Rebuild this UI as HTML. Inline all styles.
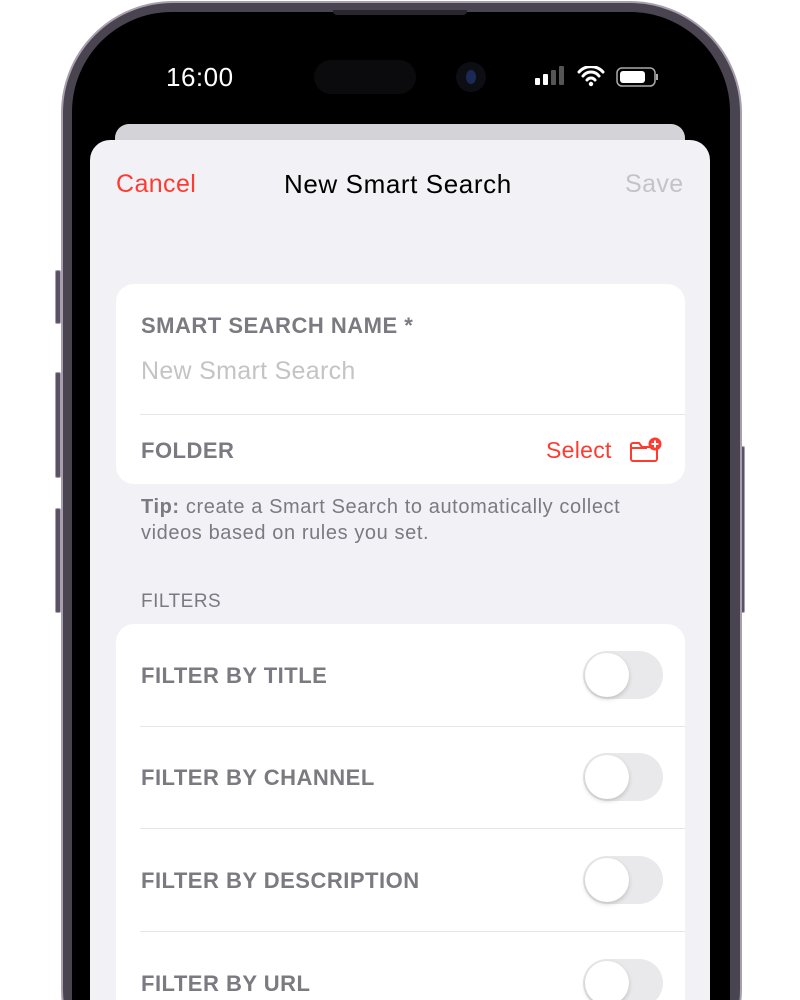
<!DOCTYPE html>
<html><head><meta charset="utf-8"><style>
*{margin:0;padding:0;box-sizing:border-box}
html,body{width:800px;height:1000px;overflow:hidden}
body{background:#fff;position:relative;font-family:"Liberation Sans",sans-serif}
.frame{position:absolute;left:61px;top:1px;width:681px;height:1100px;border-radius:112px;background:#4a4350;border:2px solid #a79fae}
.bezel{position:absolute;left:72px;top:12px;width:658px;height:1100px;border-radius:100px;background:#000}
.btn{position:absolute;background:#5a5262;border:1px solid #a79fae;border-radius:2px}
.back{position:absolute;left:115px;top:124px;width:570px;height:40px;border-radius:14px;background:#d4d3d8}
.sheet{position:absolute;left:90px;top:140px;width:620px;height:860px;border-radius:20px 20px 0 0;background:#f2f1f6}
.t{position:absolute;white-space:nowrap}
.card{position:absolute;left:116px;width:569px;background:#fff;border-radius:18px}
.lbl{position:absolute;left:25px;font-size:22px;font-weight:bold;color:#7b7a80;letter-spacing:0.5px}
.sep{position:absolute;left:24px;right:0;height:1px;background:#e6e5ea}
.tog{position:absolute;left:467px;width:80px;height:48px;border-radius:24px;background:#e9e9eb}
.tog::after{content:"";position:absolute;left:2px;top:2px;width:44px;height:44px;border-radius:50%;background:#fff;box-shadow:0 2px 5px rgba(0,0,0,.18)}
</style></head><body>
<div class="btn" style="left:55px;top:270px;width:6px;height:54px"></div>
<div class="btn" style="left:55px;top:372px;width:6px;height:106px"></div>
<div class="btn" style="left:55px;top:508px;width:6px;height:105px"></div>
<div class="btn" style="left:739px;top:446px;width:6px;height:167px"></div>
<div class="frame"></div>
<div class="bezel"></div>
<div style="position:absolute;left:333px;top:10px;width:134px;height:5px;background:#2a262e;border-radius:0 0 4px 4px"></div>
<div style="position:absolute;left:314px;top:60px;width:102px;height:34px;border-radius:17px;background:#0b0b0d"></div>
<div style="position:absolute;left:456px;top:62px;width:30px;height:30px;border-radius:50%;background:#0d0d14"></div>
<div style="position:absolute;left:466px;top:70px;width:10px;height:14px;border-radius:50%;background:#1b2a55"></div>
<div class="t" style="left:166px;top:62px;font-size:26px;color:#fff;letter-spacing:0.5px">16:00</div>
<svg style="position:absolute;left:535px;top:66px" width="125" height="22">
<rect x="0" y="12" width="5" height="7" rx="1" fill="#fff"/><rect x="8" y="8" width="5" height="11" rx="1" fill="#fff"/><rect x="16" y="4" width="5" height="15" rx="1" fill="#555"/><rect x="24" y="0" width="5" height="19" rx="1" fill="#555"/>
<path d="M44 6a16 16 0 0 1 24 0M48 10a10 10 0 0 1 16 0M52 14a5 5 0 0 1 8 0" stroke="#fff" stroke-width="3" fill="none" stroke-linecap="round"/><circle cx="56" cy="18" r="2.2" fill="#fff"/>
<rect x="82" y="2" width="38" height="18" rx="5" fill="none" stroke="#aaa" stroke-width="1.5"/><rect x="85" y="5" width="25" height="12" rx="3" fill="#fff"/><rect x="121" y="8" width="2" height="6" fill="#aaa"/>
</svg>
<div class="back"></div>
<div class="sheet"></div>
<div class="t" style="left:116px;top:170px;font-size:25px;color:#ff3b30;letter-spacing:0.4px">Cancel</div>
<div class="t" style="left:284px;top:169px;font-size:26px;color:#000;letter-spacing:0.6px">New Smart Search</div>
<div class="t" style="left:625px;top:170px;font-size:25px;color:#c4c4c7;letter-spacing:0.4px">Save</div>
<div class="card" style="top:284px;height:200px">
<div class="lbl" style="top:29px">SMART SEARCH NAME *</div>
<div class="t" style="left:25px;top:73px;font-size:25px;color:#c4c4c7;letter-spacing:0.3px">New Smart Search</div>
<div class="sep" style="top:130px"></div>
<div class="lbl" style="top:154px">FOLDER</div>
<div class="t" style="left:430px;top:153px;font-size:23px;color:#ff3b30;letter-spacing:0.3px">Select</div>
<svg style="position:absolute;left:513px;top:152px" width="34" height="28"><path d="M2 8v15a2 2 0 0 0 2 2h22a2 2 0 0 0 2-2V13a2 2 0 0 0-2-2H13l-3-4H4a2 2 0 0 0-2 2zM2 12h16" fill="none" stroke="#ff3b30" stroke-width="2"/><circle cx="26" cy="8" r="6.5" fill="#ff3b30"/><path d="M26 4.5v7M22.5 8h7" stroke="#fff" stroke-width="2"/></svg>
</div>
<div class="t" style="left:141px;top:494px;font-size:20px;color:#7b7a80;line-height:26px;letter-spacing:0.6px"><b>Tip:</b> create a Smart Search to automatically collect<br>videos based on rules you set.</div>
<div class="t" style="left:141px;top:591px;font-size:19px;color:#7b7a80;letter-spacing:0.5px">FILTERS</div>
<div class="card" style="top:624px;height:420px">
<div class="lbl" style="top:39px">FILTER BY TITLE</div><div class="tog" style="top:27px"></div>
<div class="sep" style="top:102px"></div>
<div class="lbl" style="top:141px">FILTER BY CHANNEL</div><div class="tog" style="top:129px"></div>
<div class="sep" style="top:204px"></div>
<div class="lbl" style="top:244px">FILTER BY DESCRIPTION</div><div class="tog" style="top:232px"></div>
<div class="sep" style="top:307px"></div>
<div class="lbl" style="top:347px">FILTER BY URL</div><div class="tog" style="top:335px"></div>
</div>
</body></html>
